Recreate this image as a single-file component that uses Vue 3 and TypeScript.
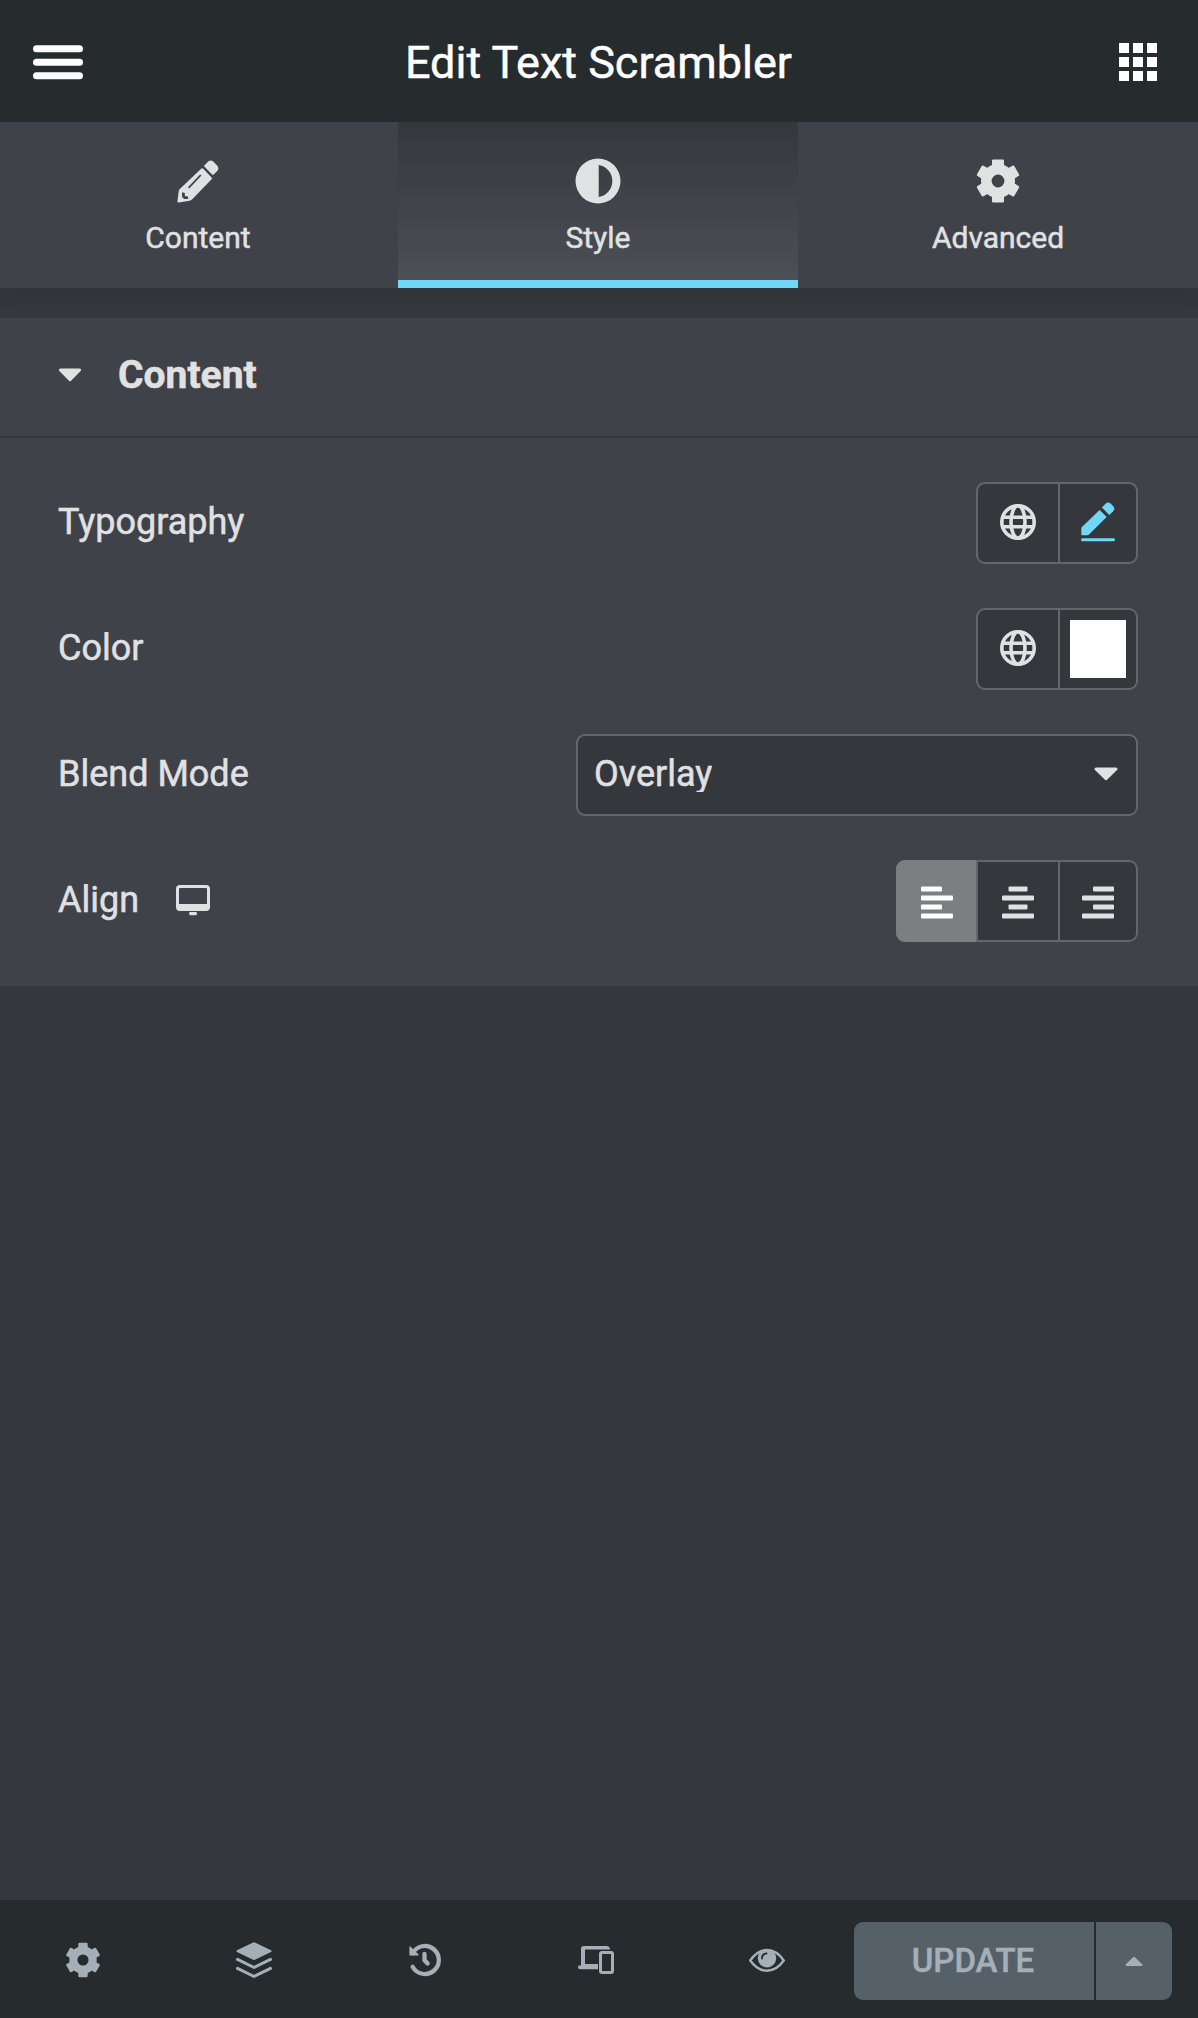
<script setup lang="ts">
import { ref } from 'vue'

type TabId = 'content' | 'style' | 'advanced'
type Align = 'left' | 'center' | 'right'

const tabs: { id: TabId; label: string }[] = [
  { id: 'content', label: 'Content' },
  { id: 'style', label: 'Style' },
  { id: 'advanced', label: 'Advanced' },
]
const activeTab = ref<TabId>('style')

const toothAngles = [0, 60, 120, 180, 240, 300]

const alignments: { id: Align; short: number; shortWidth: number }[] = [
  { id: 'left', short: 0, shortWidth: 21 },
  { id: 'center', short: 6.5, shortWidth: 19 },
  { id: 'right', short: 11, shortWidth: 21 },
]
const align = ref<Align>('left')
</script>

<template>
  <div class="panel">
    <header class="header">
      <svg class="menu" width="50" height="36" viewBox="0 0 50 36">
        <rect x="0" y="0.2" width="50" height="7" rx="3.5" />
        <rect x="0" y="13.7" width="50" height="7" rx="3.5" />
        <rect x="0" y="27.2" width="50" height="7" rx="3.5" />
      </svg>
      <h1 class="title">Edit Text Scrambler</h1>
      <div class="apps"><i v-for="n in 9" :key="n"></i></div>
    </header>

    <nav class="tabs">
      <button
        v-for="tab in tabs"
        :key="tab.id"
        class="tab"
        :class="[tab.id, { active: activeTab === tab.id }]"
        @click="activeTab = tab.id"
      >
        <svg v-if="tab.id === 'content'" class="tab-icon" width="46" height="46" viewBox="0 0 46 46">
          <path d="M26.2 10.7Q27.2 9.7 28.2 10.7L36.6 19.5Q37.4 20.4 36.6 21.3L17 41.5Q16 42.5 14.5 42.8L4.2 44.5Q2.3 44.7 2.4 42.9L3.8 32.7Q4 31.7 4.8 30.9Z" />
          <path d="M29.5 7.2L33.5 3.3Q36 1.5 38.2 3.4L42.1 7.6Q44.3 10.2 42.6 12.4L38.8 16.6Q38 17.4 37.1 16.6L29.5 8.8Q28.8 8 29.5 7.2Z" />
          <path class="groove" d="M25.8 17L13.6 29.8" />
          <path class="groove nib" d="M8.6 34.6Q7.8 38.4 9.3 39.3Q10.8 40.1 12.9 39.2" />
        </svg>
        <svg v-else-if="tab.id === 'style'" class="tab-icon" width="46" height="46" viewBox="0 0 46 46">
          <path fill-rule="evenodd" d="M23 .5a22.5 22.5 0 1 0 0 45a22.5 22.5 0 1 0 0-45zM23.7 7a16.2 16.2 0 0 1 0 32z" />
        </svg>
        <svg v-else class="tab-icon" width="46" height="46" viewBox="-23 -23 46 46">
          <circle r="11.7" fill="none" stroke="currentColor" stroke-width="10.6" />
          <rect v-for="a in toothAngles" :key="a" x="-6" y="-21.6" width="12" height="8" rx="1.4" :transform="`rotate(${a})`" />
        </svg>
        <span>{{ tab.label }}</span>
      </button>
    </nav>

    <main class="body">
      <section class="section">
        <div class="section-head">
          <svg width="24" height="14" viewBox="0 0 24 14">
            <path class="rounded" d="M2.4 2H21.6L12 11.6Z" />
          </svg>
          <h2>Content</h2>
        </div>

        <div class="controls">
          <div class="row">
            <label>Typography</label>
            <div class="group">
              <button class="cell global">
                <svg class="globe" width="36" height="36" viewBox="0 0 36 36">
                  <circle cx="18" cy="18" r="16.2" />
                  <ellipse cx="18" cy="18" rx="7" ry="16.2" />
                  <path d="M3 13.2H33M3 22.8H33" />
                </svg>
              </button>
              <button class="cell value accent">
                <svg width="34" height="40" viewBox="0 0 34 40">
                  <path d="M18.6 7.9L25.7 15L8 32.6Q7.3 33.2 6.4 33.2H1Q.3 33.2 .3 32.5V26.4Q.3 25.6 .9 25.1Z" />
                  <path d="M20.9 5.5L24.5 1.8Q27 -.6 29.6 1.6L32 4Q34.6 6.6 32.2 9.3L28.3 13Z" />
                  <rect x="0" y="36.3" width="34" height="3" rx="1.5" />
                </svg>
              </button>
            </div>
          </div>

          <div class="row">
            <label>Color</label>
            <div class="group">
              <button class="cell global">
                <svg class="globe" width="36" height="36" viewBox="0 0 36 36">
                  <circle cx="18" cy="18" r="16.2" />
                  <ellipse cx="18" cy="18" rx="7" ry="16.2" />
                  <path d="M3 13.2H33M3 22.8H33" />
                </svg>
              </button>
              <button class="cell value"><span class="swatch"></span></button>
            </div>
          </div>

          <div class="row">
            <label>Blend Mode</label>
            <div class="select">
              <span>Overlay</span>
              <svg width="24" height="14" viewBox="0 0 24 14">
                <path class="rounded" d="M2 2H22L12 11.6Z" />
              </svg>
            </div>
          </div>

          <div class="row">
            <label>Align</label>
            <svg class="desktop" width="34" height="31" viewBox="0 0 34 31">
              <path fill-rule="evenodd" d="M4 0H30Q34 0 34 4V22Q34 26 30 26H4Q0 26 0 22V4Q0 0 4 0ZM4.2 3Q3 3 3 4.2V19H31V4.2Q31 3 29.8 3Z" />
              <rect x="13" y="27" width="8" height="3.2" rx="1.4" />
            </svg>
            <div class="group">
              <button
                v-for="item in alignments"
                :key="item.id"
                class="cell align"
                :class="[item.id, { selected: align === item.id }]"
                @click="align = item.id"
              >
                <svg width="32" height="34" viewBox="0 0 32 34">
                  <rect :x="item.short" y=".4" :width="item.shortWidth" height="5.2" rx="1" />
                  <rect x="0" y="9.4" width="32" height="5.2" rx="1" />
                  <rect :x="item.short" y="18.4" :width="item.shortWidth" height="5.2" rx="1" />
                  <rect x="0" y="27.4" width="32" height="5.2" rx="1" />
                </svg>
              </button>
            </div>
          </div>
        </div>
      </section>
    </main>

    <footer class="footer">
      <div class="tools">
        <button class="tool">
          <svg width="36" height="36" viewBox="-23 -23 46 46">
            <circle r="12.3" fill="none" stroke="currentColor" stroke-width="10.4" />
            <rect v-for="a in toothAngles" :key="a" x="-6" y="-22" width="12" height="8" rx="1.4" :transform="`rotate(${a})`" />
          </svg>
        </button>
        <button class="tool">
          <svg width="36" height="36" viewBox="0 0 36 36">
            <path d="M17.1 .5Q18 .1 18.9 .5L35 8.2Q36.4 9.1 35 10L18.9 17.7Q18 18.1 17.1 17.7L1 10Q-.4 9.1 1 8.2Z" />
            <path class="line" d="M1.5 17.4L18 25.5L34.5 17.4M1.5 26.4L18 34.5L34.5 26.4" />
          </svg>
        </button>
        <button class="tool">
          <svg width="36" height="36" viewBox="0 0 36 36">
            <path class="arc" d="M5.6 11.2A14 14 0 1 1 5.6 24.8" />
            <path d="M2.4 4.8Q2.6 3.8 3.4 4.6L11.6 12.6Q12 13.4 11 13.4H3Q2.4 13.4 2.4 12.7Z" />
            <path class="arc" d="M17.5 12V18.4L20.6 21.4" />
          </svg>
        </button>
        <button class="tool">
          <svg width="36" height="36" viewBox="0 0 36 36">
            <path fill-rule="evenodd" d="M6 4H28.5Q32 4 32 7.5H7V22H20V27.2H2Q0 27.2 0 25Q0 23.6 1.5 23.6H3V7Q3 4 6 4Z" />
            <path fill-rule="evenodd" d="M24 9H33Q36 9 36 12V29Q36 32 33 32H24Q21 32 21 29V12Q21 9 24 9ZM24 12V29H33V12Z" />
          </svg>
        </button>
        <button class="tool">
          <svg width="36" height="36" viewBox="0 0 36 36">
            <path class="lid" d="M1.2 18.5Q8.5 8 18 8T34.8 18.5Q27.5 28.7 18 28.7T1.2 18.5Z" />
            <circle cx="18" cy="16.2" r="9.2" />
            <path class="glint" d="M13 16.6Q12.9 11.8 17.6 11.4" />
          </svg>
        </button>
      </div>
      <div class="publish">
        <button class="update">UPDATE</button>
        <button class="more">
          <svg width="18" height="11" viewBox="0 0 18 11">
            <path class="rounded small" d="M1.5 9H16.5L9 1.8Z" />
          </svg>
        </button>
      </div>
    </footer>
  </div>
</template>

<style>
body {
  background: #34373b;
}
</style>

<style scoped>
* {
  box-sizing: border-box;
}

.panel {
  display: flex;
  flex-direction: column;
  width: 1198px;
  height: 2018px;
  background: #34373b;
  color: #e0e1e3;
  font-family: Roboto, sans-serif;
  font-size: 36px;
  -webkit-text-stroke: 0.5px currentColor;
}

button {
  margin: 0;
  padding: 0;
  border: 0;
  background: none;
  color: inherit;
  font: inherit;
}

svg {
  display: block;
  flex: none;
  fill: currentColor;
}

.rounded {
  stroke: currentColor;
  stroke-width: 3;
  stroke-linejoin: round;
}

.rounded.small {
  stroke-width: 2;
}

.header {
  position: relative;
  z-index: 1;
  display: flex;
  align-items: center;
  justify-content: space-between;
  height: 122px;
  padding: 0 41px 0 33px;
  background: #262b2d;
  color: #fff;
}

.menu {
  margin-top: 3px;
}

.title {
  margin: 0;
  padding: 4px 5px 0 0;
  font-size: 45px;
  font-weight: 400;
  line-height: 60px;
}

.apps {
  display: grid;
  grid-template-columns: repeat(3, 10px);
  gap: 4px;
  margin-top: 2px;
}

.apps i {
  height: 10px;
  background: #fff;
}

.tabs {
  display: flex;
  height: 166px;
  background: #404249;
  box-shadow: 0 3px 18px rgba(0, 0, 0, 0.1);
}

.tab {
  display: flex;
  flex-direction: column;
  align-items: center;
  width: 400px;
  padding-top: 36px;
  font-size: 30px;
  line-height: 36px;
}

.tab.content {
  width: 398px;
  padding-right: 2px;
}

.tab span {
  margin-top: 16px;
}

.tab.active {
  border-bottom: 8px solid #71d7f7;
  background: linear-gradient(180deg, #34373b, #4c4f56);
}

.groove {
  fill: none;
  stroke: #404249;
  stroke-width: 1.8;
}

.groove.nib {
  stroke-width: 2.8;
}

.body {
  flex: 1;
  padding-top: 30px;
}

.section {
  background: #404249;
}

.section-head {
  display: flex;
  align-items: center;
  gap: 36px;
  height: 120px;
  padding: 0 58px 4px 57.5px;
  border-bottom: 2px solid #34373b;
}

.section-head h2 {
  margin: 0 0 0 0.5px;
  font-size: 39px;
  font-weight: 700;
}

.controls {
  display: flex;
  flex-direction: column;
  gap: 44px;
  padding: 44px 60px 44px 58px;
}

.row {
  display: flex;
  align-items: center;
  height: 82px;
}

.row label {
  padding-bottom: 2px;
}

.group {
  display: flex;
  height: 82px;
  margin-left: auto;
  border: 2px solid #64666a;
  border-radius: 9px;
  background: #34373b;
}

.cell {
  display: flex;
  align-items: center;
  justify-content: center;
}

.cell + .cell {
  border-left: 2px solid #64666a;
}

.global {
  width: 80px;
}

.value {
  width: 78px;
}

.accent {
  padding-bottom: 2px;
  color: #71d7f7;
}

.globe {
  margin-bottom: 1.5px;
  fill: none;
  stroke: currentColor;
  stroke-width: 3.6;
}

.swatch {
  width: 56px;
  height: 58px;
  background: #fff;
}

.select {
  display: flex;
  align-items: center;
  justify-content: space-between;
  width: 562px;
  height: 82px;
  margin-left: auto;
  padding: 0 18px 0 16px;
  border: 2px solid #64666a;
  border-radius: 9px;
  background: #34373b;
}

.select span {
  overflow: hidden;
  line-height: 36px;
}

.select svg,
.select span {
  margin-bottom: 3px;
}

.desktop {
  margin: 0 0 2px 37px;
}

.cell.align {
  width: 82px;
  padding-top: 3px;
}

.cell.align.left {
  width: 78px;
}

.cell.align.right {
  width: 78px;
  padding-right: 1px;
}

.cell.align.left.selected {
  width: 80px;
  margin: -2px 0 -2px -2px;
  padding-left: 2px;
  border-radius: 9px 0 0 9px;
}

.cell.align.selected {
  background: #7d7e82;
  color: #fff;
}

.footer {
  display: flex;
  justify-content: space-between;
  height: 118px;
  padding-right: 26px;
  background: #262b2d;
  color: #a4afb7;
}

.tools {
  display: flex;
  margin-left: -2.5px;
}

.tool {
  display: flex;
  align-items: center;
  justify-content: center;
  width: 171px;
  padding-top: 2px;
}

.line,
.arc,
.lid,
.glint {
  fill: none;
  stroke: currentColor;
  stroke-width: 3;
  stroke-linecap: round;
  stroke-linejoin: round;
}

.arc {
  stroke-width: 4.3;
}

.lid {
  stroke-width: 2.4;
}

.glint {
  stroke: #262b2d;
  stroke-width: 1.8;
}

.publish {
  display: flex;
  gap: 2px;
  width: 318px;
  height: 78px;
  margin-top: 22px;
  overflow: hidden;
  border-radius: 9px;
}

.publish button {
  display: flex;
  align-items: center;
  justify-content: center;
  background: #556068;
}

.publish .update {
  width: 240px;
  padding: 0 2px 2px 0;
  font-size: 33px;
  font-weight: 500;
}

.publish .more {
  width: 76px;
}
</style>
